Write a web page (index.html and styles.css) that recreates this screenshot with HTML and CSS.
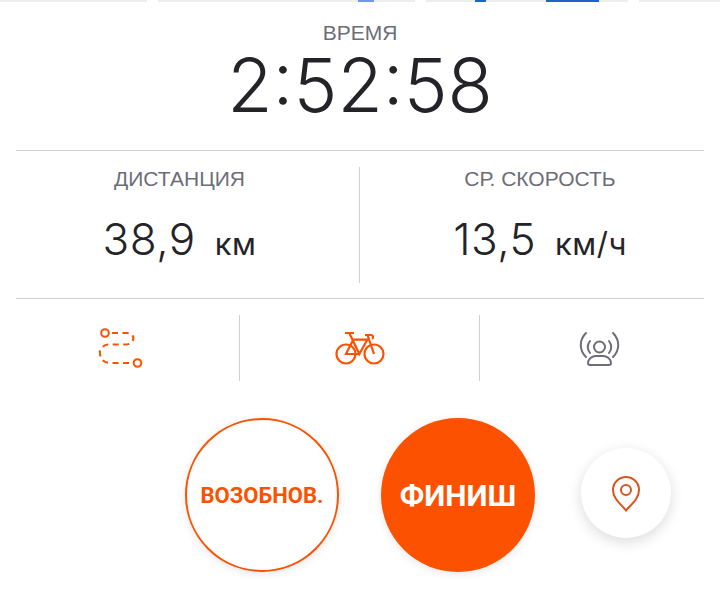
FILE: index.html
```html
<!DOCTYPE html>
<html lang="ru">

<head>
  <meta charset="UTF-8">
  <meta name="viewport" content="width=device-width, initial-scale=1.0">
  <title>Запись</title>
  <link rel="stylesheet" href="styles.css">
</head>

<body>
  <!-- Край карты сверху -->
  <div class="map-edge">
    <span class="edge edge-a"></span>
    <span class="edge edge-gap"></span>
    <span class="edge edge-b"></span>
    <span class="edge edge-blue1"></span>
    <span class="edge edge-c"></span>
    <span class="edge edge-gap"></span>
    <span class="edge edge-d"></span>
    <span class="edge edge-blue2"></span>
    <span class="edge edge-e"></span>
    <span class="edge edge-blue3"></span>
    <span class="edge edge-f"></span>
    <span class="edge edge-gap"></span>
    <span class="edge edge-g"></span>
  </div>

  <div class="time-block">
    <div class="label">ВРЕМЯ</div>
    <div class="time">2:52:58</div>
  </div>

  <div class="stats">
    <div class="stat">
      <div class="label">ДИСТАНЦИЯ</div>
      <div class="value">38,9<span class="unit">км</span></div>
    </div>
    <div class="stat">
      <div class="label">СР. СКОРОСТЬ</div>
      <div class="value">13,5<span class="unit">км/ч</span></div>
    </div>
  </div>

  <div class="tools">
    <div class="tool">
      <svg width="46" height="42" viewBox="0 0 46 42" fill="none" stroke="#fc5200" stroke-width="2">
        <circle cx="8" cy="6" r="3.800" />
        <circle cx="40.500" cy="36" r="3.800" />
        <path d="M15 6h15c7 0 8 7 4 10-1.500 1-3 1.500-6 1.500H12c-5 0-10 4-9 9 .5 6 4 9.500 10 9.500h20" stroke-dasharray="6 4.500" />
      </svg>
    </div>
    <div class="tool">
      <svg width="50" height="34" viewBox="0 0 50 34" fill="none" stroke="#fc5200" stroke-width="2.200">
        <circle cx="11" cy="23" r="9.500" />
        <circle cx="39" cy="23" r="9.500" />
        <path d="M10 2h9M14.300 2l10 21 8-14.300H18.300L11 23h13.300M30 4h6c2 0 3 2.500 1 4M32.500 4L39 23" />
      </svg>
    </div>
    <div class="tool">
      <svg width="42" height="36" viewBox="0 0 42 36" fill="none" stroke="#6d6d78" stroke-width="2" stroke-linecap="round">
        <circle cx="20.500" cy="17" r="5.500" />
        <path d="M11 35c-1.500 0-2-1-2-2 0-4 4-7 8-7h7c4 0 8 3 8 7 0 1-.5 2-2 2z" />
        <path d="M11 11c-3 4-3 8 0 12M30 11c3 4 3 8 0 12M7 3C0 10 0 20 7 27M34 3c7 7 7 17 0 24" />
      </svg>
    </div>
  </div>

  <div class="actions">
    <button class="round resume">ВОЗОБНОВ.</button>
    <button class="round finish">ФИНИШ</button>
    <button class="pin-button">
      <svg width="30" height="38" viewBox="0 0 30 38" fill="none" stroke="#d9541e" stroke-width="2">
        <path d="M15 36.500C10 30 2 25 2 16a13 13 0 0 1 26 0c0 9-8 14.500-13 20.500z" />
        <circle cx="15" cy="16" r="5" />
      </svg>
    </button>
  </div>
</body>

</html>
```

FILE: styles.css
```css
* {
  box-sizing: border-box;
}

body {
  margin: 0;
  height: 592px;
  overflow: hidden;
  background: white;
  font-family: Inter, sans-serif;
  color: #242428;
}

.map-edge {
  display: flex;
  height: 2px;
}

.edge {
  background: #eeeeee;
}

.edge-a { width: 147px; }
.edge-gap { width: 11px; background: white; }
.edge-b { width: 200px; }
.edge-blue1 { width: 16px; background: #6f97ea; }
.edge-c { width: 41px; }
.edge-d { width: 49px; }
.edge-blue2 { width: 11px; background: #1f62c8; }
.edge-e { width: 60px; }
.edge-blue3 { width: 53px; background: #1f62c8; }
.edge-f { width: 29px; }
.edge-g { flex-grow: 1; }

.label {
  font-family: "Liberation Sans", sans-serif;
  font-size: 21px;
  line-height: 24px;
  color: #6d6d78;
  text-align: center;
}

.time-block {
  height: 148px;
  padding-top: 19px;
  text-align: center;
}

.time {
  font-size: 74px;
  line-height: 80px;
  font-weight: 350;
}

.stats {
  display: flex;
  margin: 0 16px;
  padding: 16px 0 15px;
  height: 149px;
  border-top: 1px solid #cfcfd4;
  border-bottom: 1px solid #cfcfd4;
}

.stat {
  flex: 0 0 360px;
  text-align: center;
}

/* columns run out to the screen edge, the rules don't */
.stat:first-child {
  margin-left: -16px;
  border-right: 1px solid #cfcfd4;
}

.stat:last-child {
  margin-right: -16px;
}

.value {
  margin-top: 22px;
  font-size: 44px;
  line-height: 52px;
  font-weight: 350;
  letter-spacing: 0.5px;
}

.unit {
  margin-left: 19px;
  font-size: 31px;
  font-weight: 400;
}

.tools {
  display: flex;
  margin: 16px 0 0;
  height: 66px;
}

.tool {
  flex: 0 0 240px;
  display: flex;
  align-items: center;
  justify-content: center;
  border-right: 1px solid #cfcfd4;
}

.tool:last-child {
  border-right: none;
}

.actions {
  display: flex;
  align-items: flex-start;
  margin-top: 37px;
  padding-left: 185px;
}

.round {
  width: 154px;
  height: 154px;
  padding: 0;
  border-radius: 50%;
  font-family: Roboto, sans-serif;
  font-weight: 700;
  box-shadow: 0 2px 8px rgba(0, 0, 0, 0.1);
}

.resume {
  background: white;
  border: 2px solid #fc5200;
  color: #fc5200;
  font-size: 22px;
}

.finish {
  margin-left: 42px;
  background: #fc5200;
  border: none;
  color: white;
  font-size: 30px;
}

.pin-button {
  display: flex;
  align-items: center;
  justify-content: center;
  width: 90px;
  height: 90px;
  margin: 30px 0 0 46px;
  padding: 0;
  background: white;
  border: none;
  border-radius: 50%;
  box-shadow: 0 4px 14px rgba(0, 0, 0, 0.14);
}
```
